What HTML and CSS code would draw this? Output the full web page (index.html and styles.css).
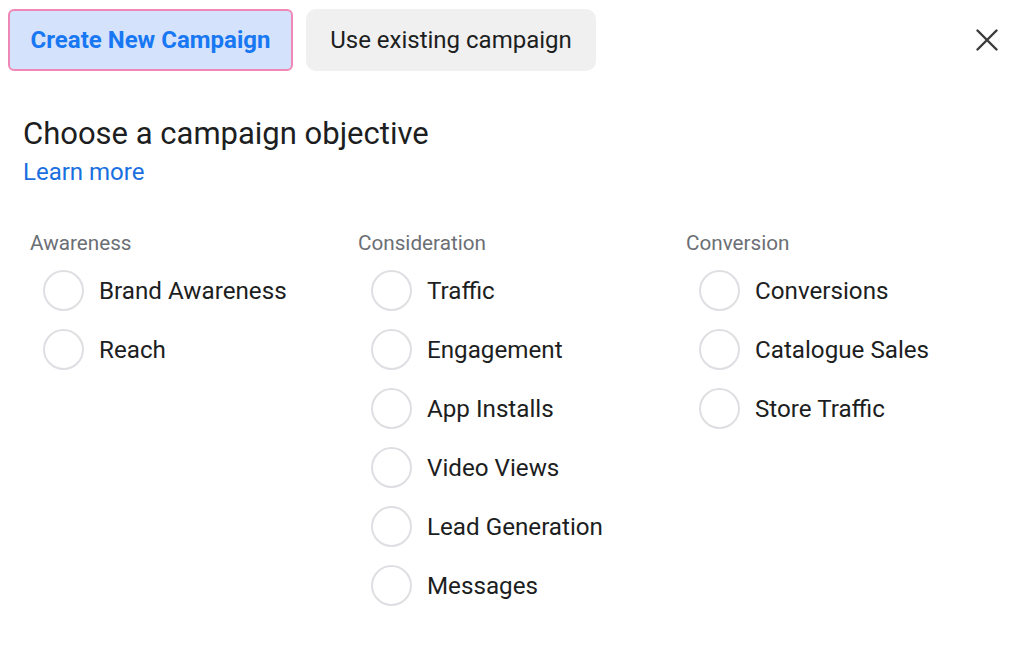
FILE: index.html
```html
<!DOCTYPE html>
<html lang="en">
<head>
<meta charset="utf-8">
<title>Choose a campaign objective</title>
<link rel="stylesheet" href="styles.css">
</head>
<body>
<div class="dialog">
  <div class="topbar">
    <button class="tab tab-active">Create New Campaign</button>
    <button class="tab tab-idle">Use existing campaign</button>
    <button class="close" aria-label="Close">
      <svg width="22" height="22" viewBox="0 0 22 22"><path d="M1.5 1.5 L20.5 20.5 M20.5 1.5 L1.5 20.5" stroke="#3a3a3a" stroke-width="2.4" stroke-linecap="round" fill="none"/></svg>
    </button>
  </div>
  <div class="intro">
    <h1 class="title">Choose a campaign objective</h1>
    <a class="learn" href="#">Learn more</a>
  </div>
  <div class="columns">
    <div class="col">
      <div class="col-label">Awareness</div>
      <div class="opt"><span class="radio"></span><span class="opt-text">Brand Awareness</span></div>
      <div class="opt"><span class="radio"></span><span class="opt-text">Reach</span></div>
    </div>
    <div class="col">
      <div class="col-label">Consideration</div>
      <div class="opt"><span class="radio"></span><span class="opt-text">Traffic</span></div>
      <div class="opt"><span class="radio"></span><span class="opt-text">Engagement</span></div>
      <div class="opt"><span class="radio"></span><span class="opt-text">App Installs</span></div>
      <div class="opt"><span class="radio"></span><span class="opt-text">Video Views</span></div>
      <div class="opt"><span class="radio"></span><span class="opt-text">Lead Generation</span></div>
      <div class="opt"><span class="radio"></span><span class="opt-text">Messages</span></div>
    </div>
    <div class="col">
      <div class="col-label">Conversion</div>
      <div class="opt"><span class="radio"></span><span class="opt-text">Conversions</span></div>
      <div class="opt"><span class="radio"></span><span class="opt-text">Catalogue Sales</span></div>
      <div class="opt"><span class="radio"></span><span class="opt-text">Store Traffic</span></div>
    </div>
  </div>
</div>
</body>
</html>
```
FILE: styles.css
```css
html, body {
  margin: 0;
  padding: 0;
  background: #ffffff;
}
body {
  font-family: Roboto, "Liberation Sans", Arial, sans-serif;
  color: #1c1e21;
  width: 1024px;
  height: 671px;
  overflow: hidden;
}
.dialog {
  padding: 9px 0 0 0;
}
.topbar {
  display: flex;
  align-items: center;
  padding-left: 8px;
  padding-right: 26px;
}
.tab {
  height: 62px;
  box-sizing: border-box;
  font-family: Roboto, "Liberation Sans", Arial, sans-serif;
  font-size: 24px;
  line-height: 28px;
  cursor: pointer;
  margin: 0;
}
.tab-active {
  background: #d4e3fb;
  color: #1877f2;
  font-weight: 700;
  border: 2px solid #ef88b6;
  border-radius: 6px;
  padding: 0 19px;
  width: 285px;
}
.tab-idle {
  background: #f0f0f0;
  color: #1c1e21;
  font-weight: 400;
  border: none;
  border-radius: 10px;
  padding: 0 22px;
  margin-left: 13px;
  width: 290px;
}
.close {
  margin-left: auto;
  background: none;
  border: none;
  padding: 0;
  width: 22px;
  height: 22px;
  display: flex;
  align-items: center;
  justify-content: center;
}
.close svg {
  display: block;
}
.intro {
  padding-left: 23px;
  margin-top: 44px;
}
.title {
  margin: 0;
  font-size: 31px;
  line-height: 38px;
  font-weight: 400;
  color: #1c1e21;
}
.learn {
  display: block;
  margin-top: 5px;
  font-size: 24px;
  line-height: 28px;
  color: #1a6fe0;
  text-decoration: none;
}
.columns {
  display: grid;
  grid-template-columns: repeat(3, 328px);
  padding-left: 30px;
  margin-top: 45px;
}
.col-label {
  font-size: 20.7px;
  line-height: 24px;
  color: #6b6f75;
  margin-bottom: 6px;
}
.opt {
  display: flex;
  align-items: center;
  height: 59px;
  padding-left: 13px;
}
.radio {
  width: 41px;
  height: 41px;
  box-sizing: border-box;
  border: 2px solid #dedfe2;
  border-radius: 50%;
  flex: none;
}
.opt-text {
  margin-left: 15px;
  font-size: 24.2px;
  line-height: 28px;
  color: #1c1e21;
}
```
